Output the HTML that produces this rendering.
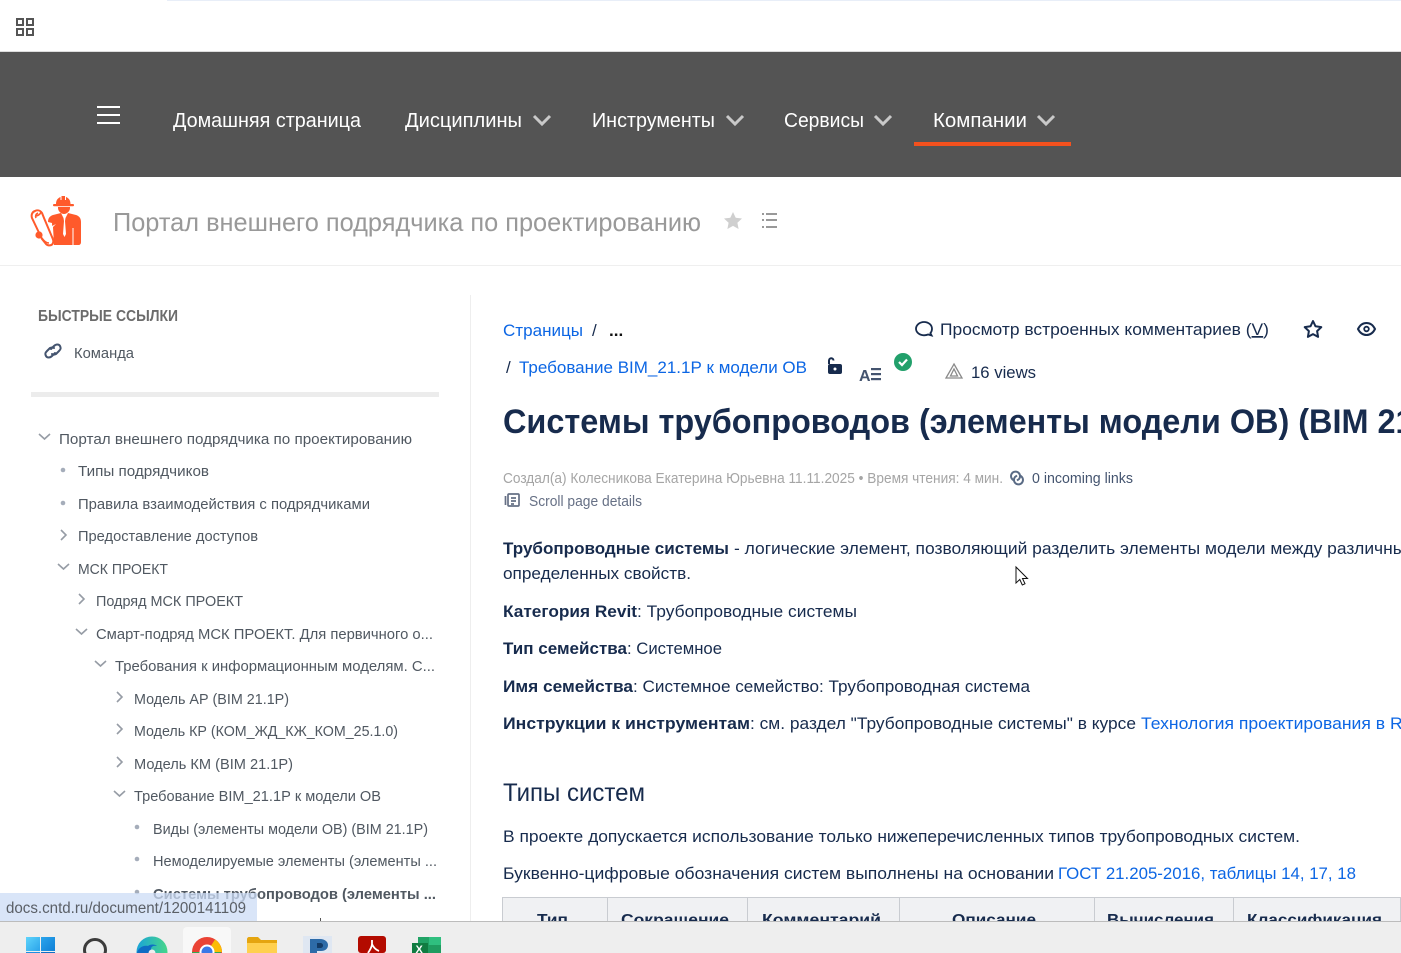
<!DOCTYPE html>
<html lang="ru"><head><meta charset="utf-8"><title>Системы трубопроводов</title>
<style>
html,body{margin:0;padding:0;background:#fff;width:1401px;height:953px;overflow:hidden}
svg{display:block}
text{font-family:"Liberation Sans",sans-serif;white-space:pre}
.nav{font-size:20px;fill:#fff}
.s{font-size:15px;fill:#505861}
.b{font-size:17px;fill:#172b4d}
.bb{font-weight:bold}
.l{fill:#0c66e4}
.c{fill:none;stroke:#969ca5;stroke-width:1.6}
.th{font-size:16px;font-weight:bold;fill:#172b4d}
</style></head><body>
<svg width="1401" height="953" viewBox="0 0 1401 953" xmlns="http://www.w3.org/2000/svg">
<rect width="1401" height="953" fill="#fff"/>
<rect x="167" y="0" width="1234" height="1" fill="#e8eef8"/>
<g fill="none" stroke="#555" stroke-width="2"><rect x="17" y="19" width="6" height="6"/><rect x="27" y="19" width="6" height="6"/><rect x="17" y="29" width="6" height="6"/><rect x="27" y="29" width="6" height="6"/></g>
<rect y="51" width="1401" height="1" fill="#ddd"/>
<rect y="52" width="1401" height="125" fill="#545454"/>
<g fill="#fff"><rect x="97" y="106" width="23" height="2"/><rect x="97" y="114" width="23" height="2"/><rect x="97" y="122" width="23" height="2"/></g>
<text class="nav" x="173" y="127" textLength="188" lengthAdjust="spacingAndGlyphs">Домашняя страница</text>
<text class="nav" x="405" y="127" textLength="117" lengthAdjust="spacingAndGlyphs">Дисциплины</text>
<text class="nav" x="592" y="127" textLength="123" lengthAdjust="spacingAndGlyphs">Инструменты</text>
<text class="nav" x="784" y="127" textLength="80" lengthAdjust="spacingAndGlyphs">Сервисы</text>
<text class="nav" x="933" y="127" textLength="94" lengthAdjust="spacingAndGlyphs">Компании</text>
<g fill="none" stroke="#c9c9c9" stroke-width="3"><path d="M534 116l8 8 8-8"/><path d="M727 116l8 8 8-8"/><path d="M875 116l8 8 8-8"/><path d="M1038 116l8 8 8-8"/></g>
<rect x="914" y="142" width="157" height="4" fill="#f4511e"/>

<g fill="#ff5a2b">
<path d="M56 204c0-4 2-6 4.500-7v3h1v-4h3.500v4h1v-3c2.500 1 4.500 3 4.500 7z"/>
<rect x="53" y="204" width="21" height="2.200" rx="1"/>
<path d="M58 207h12v1c0 3-3 6-6 6s-6-3-6-6z"/>
<path d="M48 245v-23c0-4 2-6 5-7l8-2 2.500 5 .5 3-1 13 1.500 3 1.500-3-1-13 .5-3 2.500-5 8 2c3 1 5 3 5 7v20c0 2-1 3-2.500 3z"/>
</g>
<path d="M48 222l4 1 1 22h-5z" fill="#fff"/>
<path d="M73 228v17" stroke="#fff" stroke-width="1"/>
<path d="M56 224l-3 3 1 18h-2l-2-18z" fill="#fff"/>
<path d="M35 211c-3 1-4 4-3 7l10 21 4 5c2 2 6 2 7-1 1-2 0-4-1-6l-8-19-2-5c-2-3-5-3-7-2z" fill="#fff" stroke="#ff5a2b" stroke-width="2"/>
<path d="M35 216c2 0 5-1 6-4M38 213c-2 1-3 3-2 5" fill="none" stroke="#ff5a2b" stroke-width="1.600"/>
<path d="M42 238c2 3 4 5 7 5" fill="none" stroke="#ff5a2b" stroke-width="1.400"/>
<circle cx="39" cy="235" r="3.600" fill="#ff5a2b"/>

<text x="113" y="231" font-size="26" fill="#999" textLength="588" lengthAdjust="spacingAndGlyphs">Портал внешнего подрядчика по проектированию</text>
<path d="M733 212l2.700 5.700 6.300.8-4.600 4.300 1.200 6.200-5.600-3.100-5.600 3.100 1.200-6.200-4.600-4.300 6.300-.8z" fill="#cfcfcf"/>
<g fill="#999"><rect x="762" y="213" width="2" height="2"/><rect x="766" y="213" width="11" height="2"/><rect x="762" y="219" width="2" height="2"/><rect x="766" y="219" width="11" height="2"/><rect x="762" y="226" width="2" height="2"/><rect x="766" y="226" width="11" height="2"/></g>
<rect y="265" width="1401" height="1" fill="#efefef"/>
<rect x="470" y="295" width="1" height="626" fill="#eee"/>

<text x="38" y="321" font-size="15.500" font-weight="bold" fill="#6b6b6b" textLength="140" lengthAdjust="spacingAndGlyphs">БЫСТРЫЕ ССЫЛКИ</text>
<g fill="none" stroke="#44546f" stroke-width="2" stroke-linecap="round"><path d="M51 349l3-3c2-2 5-2 6 0s1 3-1 5l-3 3c-2 1-3 1-4 0"/><path d="M55 353l-3 3c-2 2-5 2-6 0s-1-3 1-5l3-3c2-1 3-1 4 0"/></g>
<text class="s" x="74" y="358" textLength="60" lengthAdjust="spacingAndGlyphs">Команда</text>
<rect x="31" y="392" width="408" height="5" fill="#ececec"/>

<path class="c" d="M39 434l5.500 5 5.500-5"/>
<text class="s" x="59" y="444" textLength="353" lengthAdjust="spacingAndGlyphs">Портал внешнего подрядчика по проектированию</text>
<circle cx="63" cy="470" r="2.300" fill="#a5adba"/>
<text class="s" x="78" y="476" textLength="131" lengthAdjust="spacingAndGlyphs">Типы подрядчиков</text>
<circle cx="63" cy="503" r="2.300" fill="#a5adba"/>
<text class="s" x="78" y="509" textLength="292" lengthAdjust="spacingAndGlyphs">Правила взаимодействия с подрядчиками</text>
<path class="c" d="M61 530l5 5-5 5"/>
<text class="s" x="78" y="541" textLength="180" lengthAdjust="spacingAndGlyphs">Предоставление доступов</text>
<path class="c" d="M58 564l5.500 5 5.500-5"/>
<text class="s" x="78" y="574" textLength="90" lengthAdjust="spacingAndGlyphs">МСК ПРОЕКТ</text>
<path class="c" d="M79 594l5 5-5 5"/>
<text class="s" x="96" y="606" textLength="147" lengthAdjust="spacingAndGlyphs">Подряд МСК ПРОЕКТ</text>
<path class="c" d="M76 629l5.500 5 5.500-5"/>
<text class="s" x="96" y="639" textLength="337" lengthAdjust="spacingAndGlyphs">Смарт-подряд МСК ПРОЕКТ. Для первичного о...</text>
<path class="c" d="M95 661l5.500 5 5.500-5"/>
<text class="s" x="115" y="671" textLength="320" lengthAdjust="spacingAndGlyphs">Требования к информационным моделям. С...</text>
<path class="c" d="M117 692l5 5-5 5"/>
<text class="s" x="134" y="704" textLength="155" lengthAdjust="spacingAndGlyphs">Модель АР (BIM 21.1Р)</text>
<path class="c" d="M117 724l5 5-5 5"/>
<text class="s" x="134" y="736" textLength="264" lengthAdjust="spacingAndGlyphs">Модель КР (КОМ_ЖД_КЖ_КОМ_25.1.0)</text>
<path class="c" d="M117 757l5 5-5 5"/>
<text class="s" x="134" y="769" textLength="159" lengthAdjust="spacingAndGlyphs">Модель КМ (BIM 21.1Р)</text>
<path class="c" d="M114 791l5.500 5 5.500-5"/>
<text class="s" x="134" y="801" textLength="247" lengthAdjust="spacingAndGlyphs">Требование BIM_21.1Р к модели ОВ</text>
<circle cx="137" cy="827" r="2.300" fill="#a5adba"/>
<text class="s" x="153" y="834" textLength="275" lengthAdjust="spacingAndGlyphs">Виды (элементы модели ОВ) (BIM 21.1Р)</text>
<circle cx="137" cy="859" r="2.300" fill="#a5adba"/>
<text class="s" x="153" y="866" textLength="284" lengthAdjust="spacingAndGlyphs">Немоделируемые элементы (элементы ...</text>
<circle cx="137" cy="892" r="2.300" fill="#a5adba"/>
<text class="s bb" x="153" y="899" textLength="283" lengthAdjust="spacingAndGlyphs">Системы трубопроводов (элементы ...</text>

<text class="b l" x="503" y="336" textLength="80" lengthAdjust="spacingAndGlyphs">Страницы</text>
<text class="b" x="592" y="336">/</text>
<text x="609" y="336" font-size="17" font-weight="bold" fill="#111">...</text>
<path d="M924 322c4.500 0 8 3 8 6.800 0 1.700-.6 3.200-1.600 4.300l1.200 2.400-3.500-1c-1.200.5-2.600.8-4.100.8-4.500 0-8-3-8-6.500s3.500-6.800 8-6.800z" fill="none" stroke="#172b4d" stroke-width="1.800"/>
<text class="b" x="940" y="335" textLength="329" lengthAdjust="spacingAndGlyphs">Просмотр встроенных комментариев (<tspan text-decoration="underline">V</tspan>)</text>
<path d="M1313 321l2.500 5.300 5.800.8-4.200 4 1 5.800-5.100-2.800-5.100 2.800 1-5.800-4.200-4 5.800-.8z" fill="none" stroke="#172b4d" stroke-width="2" stroke-linejoin="round"/>
<path d="M1358 329c2-4 5-6 8.500-6s6.500 2 8.500 6c-2 4-5 6-8.500 6s-6.500-2-8.500-6z" fill="none" stroke="#172b4d" stroke-width="2"/><circle cx="1366.500" cy="329" r="2.300" fill="none" stroke="#172b4d" stroke-width="1.800"/>

<text class="b" x="506" y="373">/</text>
<text class="b l" x="519" y="373" textLength="288" lengthAdjust="spacingAndGlyphs">Требование BIM_21.1Р к модели ОВ</text>
<path d="M829 364v-3.500c0-3 4.500-3 4.500 0" fill="none" stroke="#172b4d" stroke-width="2"/><rect x="828" y="364" width="14" height="10" rx="2" fill="#172b4d"/><circle cx="835" cy="369" r="1.500" fill="#fff"/>
<text x="859" y="381" font-size="16" font-weight="bold" fill="#44546f">A</text>
<g fill="#44546f"><rect x="871" y="368" width="10" height="2.200"/><rect x="871" y="373" width="10" height="2.200"/><rect x="871" y="378" width="10" height="2.200"/></g>
<circle cx="903" cy="362" r="9" fill="#22a06b"/><path d="M899 362l3 3 5-5.500" fill="none" stroke="#fff" stroke-width="2.200"/>
<path d="M954 364l8 14h-16z M954 369l-3.500 7h7z" fill="none" stroke="#8a8a8a" stroke-width="1.300"/>
<text class="b" x="971" y="378" textLength="65" lengthAdjust="spacingAndGlyphs">16 views</text>

<text x="503" y="433" font-size="34" font-weight="bold" fill="#172b4d" textLength="970" lengthAdjust="spacingAndGlyphs">Системы трубопроводов (элементы модели ОВ) (BIM 21.1Р)</text>

<text x="503" y="483" font-size="14.500" fill="#a5a5a5" textLength="500" lengthAdjust="spacingAndGlyphs">Создал(а) Колесникова Екатерина Юрьевна 11.11.2025 • Время чтения: 4 мин.</text>
<g fill="none" stroke="#5a6b85" stroke-width="2"><path d="M1014.500 480.500a4.500 4.500 0 1 1 4.500 -1.500l-2 1.500"/><path d="M1019.500 475.500a4.500 4.500 0 1 1 -4.500 1.500l2-1.500"/></g>
<text x="1032" y="483" font-size="14.500" fill="#44546f" textLength="101" lengthAdjust="spacingAndGlyphs">0 incoming links</text>
<g fill="none" stroke="#667085" stroke-width="1.700"><rect x="508" y="494" width="11" height="12" rx="1"/><path d="M505.500 496v9M511 498h5M511 501h5M511 504h3"/></g>
<text x="529" y="506" font-size="14.500" fill="#667085" textLength="113" lengthAdjust="spacingAndGlyphs">Scroll page details</text>

<text class="b bb" x="503" y="554" textLength="226" lengthAdjust="spacingAndGlyphs">Трубопроводные системы</text>
<text class="b" x="734" y="554" textLength="693" lengthAdjust="spacingAndGlyphs">- логические элемент, позволяющий разделить элементы модели между различными</text>
<text class="b" x="503" y="579" textLength="188" lengthAdjust="spacingAndGlyphs">определенных свойств.</text>
<text class="b bb" x="503" y="617" textLength="134" lengthAdjust="spacingAndGlyphs">Категория Revit</text>
<text class="b" x="637" y="617" textLength="220" lengthAdjust="spacingAndGlyphs">: Трубопроводные системы</text>
<text class="b bb" x="503" y="654" textLength="124" lengthAdjust="spacingAndGlyphs">Тип семейства</text>
<text class="b" x="627" y="654" textLength="95" lengthAdjust="spacingAndGlyphs">: Системное</text>
<text class="b bb" x="503" y="692" textLength="130" lengthAdjust="spacingAndGlyphs">Имя семейства</text>
<text class="b" x="633" y="692" textLength="397" lengthAdjust="spacingAndGlyphs">: Системное семейство: Трубопроводная система</text>
<text class="b bb" x="503" y="729" textLength="247" lengthAdjust="spacingAndGlyphs">Инструкции к инструментам</text>
<text class="b" x="750" y="729" textLength="386" lengthAdjust="spacingAndGlyphs">: см. раздел "Трубопроводные системы" в курсе</text>
<text class="b l" x="1141" y="729" textLength="289" lengthAdjust="spacingAndGlyphs">Технология проектирования в Revit</text>

<text x="503" y="801" font-size="25" fill="#172b4d" textLength="142" lengthAdjust="spacingAndGlyphs">Типы систем</text>
<text class="b" x="503" y="842" textLength="797" lengthAdjust="spacingAndGlyphs">В проекте допускается использование только нижеперечисленных типов трубопроводных систем.</text>
<text class="b" x="503" y="879" textLength="551" lengthAdjust="spacingAndGlyphs">Буквенно-цифровые обозначения систем выполнены на основании</text>
<text class="b l" x="1058" y="879" textLength="298" lengthAdjust="spacingAndGlyphs">ГОСТ 21.205-2016, таблицы 14, 17, 18</text>

<rect x="503" y="897" width="898" height="24" fill="#f0f1f3"/>
<rect x="503" y="897" width="898" height="1" fill="#c9ccd1"/>
<g fill="#c9ccd1"><rect x="502" y="897" width="1" height="24"/><rect x="607" y="897" width="1" height="24"/><rect x="747" y="897" width="1" height="24"/><rect x="899" y="897" width="1" height="24"/><rect x="1094" y="897" width="1" height="24"/><rect x="1233" y="897" width="1" height="24"/><rect x="1400" y="897" width="1" height="24"/></g>
<text class="th" x="537" y="925" textLength="31" lengthAdjust="spacingAndGlyphs">Тип</text>
<text class="th" x="621" y="925" textLength="108" lengthAdjust="spacingAndGlyphs">Сокращение</text>
<text class="th" x="762" y="925" textLength="119" lengthAdjust="spacingAndGlyphs">Комментарий</text>
<text class="th" x="952" y="925" textLength="84" lengthAdjust="spacingAndGlyphs">Описание</text>
<text class="th" x="1107" y="925" textLength="107" lengthAdjust="spacingAndGlyphs">Вычисления</text>
<text class="th" x="1247" y="925" textLength="135" lengthAdjust="spacingAndGlyphs">Классификация</text>

<rect x="320" y="918" width="1" height="3" fill="#555"/>
<rect x="0" y="893" width="257" height="28" fill="#ccdcf6" fill-opacity=".75"/>
<text x="6" y="913" font-size="15.500" fill="#5a5f66" textLength="240" lengthAdjust="spacingAndGlyphs">docs.cntd.ru/document/1200141109</text>

<rect y="921" width="1401" height="32" fill="#eeeeee"/>
<rect y="921" width="1401" height="1" fill="#bcbcbc"/>
<rect x="183" y="927" width="48" height="30" rx="4" fill="#f8f8f8"/>
<defs>
<linearGradient id="w1" x1="0" y1="0" x2="1" y2="1"><stop offset="0" stop-color="#5fd4fb"/><stop offset="1" stop-color="#2aa3ea"/></linearGradient>
<linearGradient id="w2" x1="0" y1="0" x2="1" y2="1"><stop offset="0" stop-color="#2ba5ec"/><stop offset="1" stop-color="#0f7fd6"/></linearGradient>
<linearGradient id="ed" x1="0" y1="0" x2="1" y2="0"><stop offset="0" stop-color="#1aa3d8"/><stop offset="1" stop-color="#46d68a"/></linearGradient>
</defs>
<rect x="26" y="937" width="14" height="14" fill="url(#w1)"/><rect x="41" y="937" width="14" height="14" fill="url(#w2)"/><rect x="26" y="952" width="14" height="1" fill="#1f8fe0"/><rect x="41" y="952" width="14" height="1" fill="#0f6fc4"/>
<circle cx="95" cy="950" r="10.500" fill="none" stroke="#3c3c3c" stroke-width="3"/>
<circle cx="152" cy="952" r="15.500" fill="url(#ed)"/><path d="M137 953c1-5 6-8 11-7 2-2 7-2 9 0-4-1-6 1-6 3l-1 4z" fill="#0f6cc4"/><circle cx="152" cy="953" r="3.500" fill="#eee"/>
<circle cx="207" cy="952" r="15" fill="#ea4335"/><path d="M207 952l15 0a15 15 0 0 0-7-12.500z" fill="#fbbc05"/><path d="M192 952a15 15 0 0 0 1 5h28v-5z" fill="#34a853"/><circle cx="207" cy="952" r="7.500" fill="#fff"/><circle cx="207" cy="952" r="5.500" fill="#3b78e7"/>
<path d="M247 939c0-1 1-2 2-2h9l3 3h16v13h-30z" fill="#e5a50f"/><rect x="247" y="943" width="30" height="10" fill="#ffd04f"/>
<rect x="303" y="936" width="29" height="17" fill="#dfe7f2"/>
<path d="M310 939h10c5 0 8 3 8 6 0 4-3 6-7 6h-4v2h-7z" fill="#2d6ba8"/><path d="M317 943h3c2 0 3 1 3 2.500s-1 2.500-3 2.500h-3z" fill="#123a66"/>
<rect x="358" y="936" width="28" height="17" rx="3" fill="#b30b00"/><path d="M372 940v4c0 3-2 6-4 9M372 944c1 3 4 6 7 7" fill="none" stroke="#fff" stroke-width="1.800"/>
<rect x="418" y="937" width="23" height="16" fill="#2fbf7f"/><rect x="418" y="937" width="11" height="8" fill="#21a366"/><rect x="418" y="945" width="23" height="8" fill="#1f9c60"/><rect x="412" y="943" width="16" height="10" fill="#107c41"/><text x="415.500" y="953" font-size="11" font-weight="bold" fill="#fff">X</text>

<path d="M1016 567v16l3.800-3.500 2.500 5.500 2.700-1.200-2.500-5.300h5z" fill="#fff" stroke="#111" stroke-width="1"/>
</svg>
</body></html>
